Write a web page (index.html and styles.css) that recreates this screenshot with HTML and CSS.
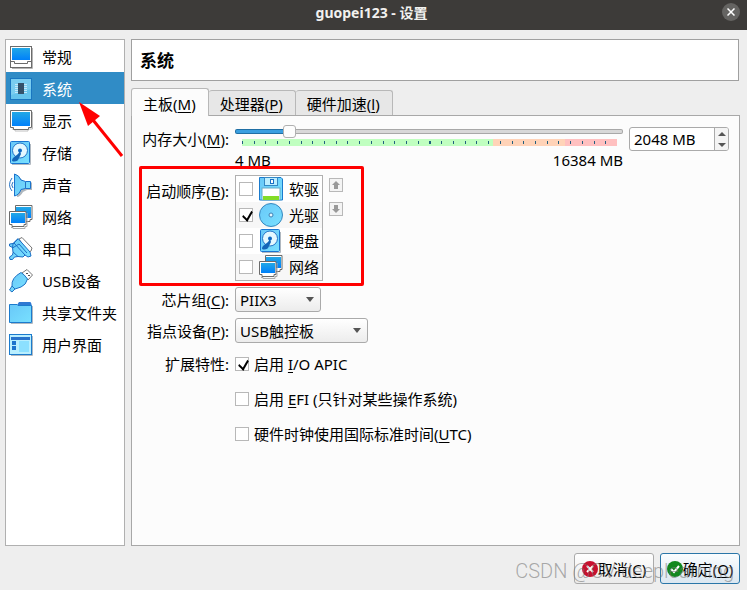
FILE: index.html
```
<!DOCTYPE html>
<html lang="zh-CN">
<head>
  <meta charset="UTF-8">
  <meta name="viewport" content="width=device-width, initial-scale=1.0">
  <title>guopei123 - 设置</title>
  <link rel="stylesheet" href="styles.css">
</head>
<body>
  <svg class="sprite" width="0" height="0" aria-hidden="true">
    <defs>
      <linearGradient id="screen" x1="0" y1="0" x2="0" y2="1">
        <stop offset="0" stop-color="#22a8e6"/>
        <stop offset="1" stop-color="#0080fa"/>
      </linearGradient>
      <linearGradient id="sky" x1="0" y1="0" x2="1" y2="1">
        <stop offset="0" stop-color="#69c8f8"/>
        <stop offset="1" stop-color="#78e0ff"/>
      </linearGradient>
      <symbol id="i-general" viewBox="0 0 24 24">
        <path d="M3 23.500H23.500V3" fill="none" stroke="#b5b5b5"/>
        <rect x="1.500" y="1.500" width="21" height="21" fill="#fff" stroke="#6b6b6b"/>
        <rect x="3" y="3" width="18" height="12" fill="url(#screen)"/>
        <path d="M2 16.500H5.500V18.500H18.500V16.500H22" fill="none" stroke="#6b6b6b"/>
      </symbol>
      <symbol id="i-system" viewBox="0 0 24 24">
        <rect x="1.500" y="1.500" width="21" height="21" fill="#65c3ec" stroke="#1976c0"/>
        <path d="M2 2H22V12L2 18Z" fill="#7acdf0"/>
        <path d="M6 7.500H18M6 9.500H18M6 11.500H18M6 13.500H18M6 15.500H18" stroke="#c4eafc"/>
        <rect x="9" y="6" width="6" height="11" fill="#34516a"/>
      </symbol>
      <symbol id="i-display" viewBox="0 0 24 24">
        <path d="M3 20H6V22H19V20H23.500V3" fill="none" stroke="#c0c0c0"/>
        <path d="M1.500 1.500H22.500V18.500H19.500V20.500H4.500V18.500H1.500Z" fill="#fff" stroke="#6b6b6b"/>
        <rect x="3" y="3" width="18" height="14" fill="url(#screen)"/>
      </symbol>
      <symbol id="i-disk" viewBox="0 0 24 24">
        <path d="M3 23.500H21.500V3" fill="none" stroke="#b0b8c0"/>
        <rect x="1.500" y=".5" width="19" height="22" rx="1" fill="url(#sky)" stroke="#1976d2"/>
        <circle cx="11" cy="9.500" r="7.500" fill="#e4f8ff" stroke="#2274c8"/>
        <path d="M11 10L9 13L4 17Q2 20 4 20.500Q9 21 10 17L12 13Z" fill="#1465b8"/>
        <circle cx="11" cy="9.500" r="2" fill="#0d67c2"/>
      </symbol>
      <symbol id="i-audio" viewBox="0 0 24 24">
        <path d="M7 3Q11 3 12.500 8L17 8.500H22V16H17L13 18Q10 23 7 23Z" fill="#aeb6bd" transform="translate(1 1)"/>
        <path d="M5.500 1Q10 2 12 7L16.500 8.500H21.500V15.500H16.500L12 16.500Q10 22 5.500 23Z" fill="url(#sky)" stroke="#1b73cd"/>
        <path d="M16.500 9V15.500M3 5Q-2 12 3 18M4 9Q1.500 12 4 15" fill="none" stroke="#2674c4"/>
      </symbol>
      <symbol id="i-network" viewBox="0 0 24 24">
        <path d="M6.500 .5H23V14.500H21V16.500H6.500Z" fill="#fff" stroke="#6b6b6b"/>
        <rect x="7" y="2" width="15" height="11" fill="url(#screen)"/>
        <path d="M2 22.500H4V23.500H16V21.500H18V8" fill="none" stroke="#aaa"/>
        <path d="M.5 6.500H17V19.500H15V21.500H3V19.500H.5Z" fill="#fff" stroke="#6b6b6b"/>
        <rect x="2" y="8" width="14" height="10" fill="url(#screen)"/>
      </symbol>
      <symbol id="i-serial" viewBox="0 0 24 24">
        <path d="M10 2L13 .5L23 11L22 14L19 16Z" fill="#fff" stroke="#777"/>
        <path d="M9 1.500L21 15L22 19L19 20L16 18L14 20L9 19.500L5.500 20L3.500 22.500H1L.5 20L3.500 18L4 15.500L3.500 10.500L.5 9V7L4 6.500Z" fill="url(#sky)" stroke="#1b6fc6"/>
        <path d="M5 6L16 18M9 2L4 7L3.500 11L10 7L18 16M4 15L9 19.500" fill="none" stroke="#1b6fc6"/>
      </symbol>
      <symbol id="i-usb" viewBox="0 0 24 24">
        <path d="M13 4L18 .5L23.500 6L19 11Z" fill="#fff" stroke="#777"/>
        <path d="M17 4.500H19M19 6.500H21" stroke="#555"/>
        <path d="M12 3.500Q15 5 18.500 10Q17 16 12 18L6 20L3 23L.5 21L3 17Q2 9 12 3.500Z" fill="url(#sky)" stroke="#2173c4"/>
        <path d="M3 17L6 20" stroke="#2173c4"/>
      </symbol>
      <symbol id="i-folder" viewBox="0 0 24 24">
        <path d="M2 22.500H23.500V5" fill="none" stroke="#b0b8c0"/>
        <path d="M8 4L10 1H21.500L22.500 3V6H8Z" fill="#2f79d2"/>
        <path d="M.5 3.500H8L9 4.500H22.500V21.500H.5Z" fill="url(#sky)" stroke="#1b7bcd"/>
      </symbol>
      <symbol id="i-ui" viewBox="0 0 24 24">
        <path d="M2 22.500H23.500V3" fill="none" stroke="#b0b8c0"/>
        <rect x=".5" y="1.500" width="22" height="20" fill="#b9efff" stroke="#1b7bcd"/>
        <rect x="2" y="4" width="19" height="3" fill="#2873cb"/>
        <path d="M3 8H7V12H3ZM3 13H7V17H3Z" fill="#1c73cd"/>
        <rect x="10" y="8" width="10" height="11" fill="#8ce0ff"/>
      </symbol>
      <symbol id="i-floppy" viewBox="0 0 24 24">
        <path d="M.5 .5H22L23.500 2V23H.5Z" fill="url(#sky)" stroke="#1b7bcd"/>
        <rect x="5.500" y=".5" width="13" height="8" fill="#bceeff" stroke="#3588c4"/>
        <rect x="11.500" y="2.500" width="3" height="4" fill="#fff" stroke="#1b6fc6"/>
        <rect x="3" y="11" width="18" height="12" fill="#fff" stroke="#68abc8"/>
        <rect x="4" y="19" width="16" height="4" fill="#83dc27"/>
      </symbol>
      <symbol id="i-optical" viewBox="0 0 24 24">
        <circle cx="12" cy="12" r="11.500" fill="url(#sky)" stroke="#3787be"/>
        <circle cx="12" cy="12" r="2" fill="#e3f7ff" stroke="#3f80b3"/>
      </symbol>
    </defs>
  </svg>

  <header class="titlebar">
    <h1>guopei123 - 设置</h1>
    <button class="close" type="button" aria-label="关闭">
      <svg width="8" height="8" viewBox="0 0 8 8"><path d="M.5 .5L7.500 7.500M7.500 .5L.5 7.500" stroke="#fff" stroke-width="1.500"/></svg>
    </button>
  </header>

  <main class="dialog">
    <nav class="sidebar">
      <a href="#general"><svg><use href="#i-general"/></svg>常规</a>
      <a href="#system" class="active"><svg><use href="#i-system"/></svg>系统
        <svg class="arrow" viewBox="0 0 46 56"><path d="M10 13L43 54" stroke="#f00" stroke-width="3"/><path d="M0 0L21 14L9 24Z" fill="#f00"/></svg>
      </a>
      <a href="#display"><svg><use href="#i-display"/></svg>显示</a>
      <a href="#storage"><svg><use href="#i-disk"/></svg>存储</a>
      <a href="#audio"><svg><use href="#i-audio"/></svg>声音</a>
      <a href="#network"><svg><use href="#i-network"/></svg>网络</a>
      <a href="#serial"><svg><use href="#i-serial"/></svg>串口</a>
      <a href="#usb"><svg><use href="#i-usb"/></svg>USB设备</a>
      <a href="#shared"><svg><use href="#i-folder"/></svg>共享文件夹</a>
      <a href="#ui"><svg><use href="#i-ui"/></svg>用户界面</a>
    </nav>

    <section class="content">
      <h2>系统</h2>
      <div class="tabs" role="tablist">
        <button type="button" role="tab" class="tab active" aria-selected="true">主板(<u>M</u>)</button>
        <button type="button" role="tab" class="tab">处理器(<u>P</u>)</button>
        <button type="button" role="tab" class="tab">硬件加速(<u>l</u>)</button>
      </div>

      <form class="panel" id="settings">
        <div class="row memory">
          <label class="name" for="memory">内存大小(<u>M</u>):</label>
          <div class="slider">
            <input type="range" id="memory" min="4" max="16384" value="2048">
            <div class="scale"></div>
            <div class="limits"><span>4 MB</span><span>16384 MB</span></div>
          </div>
          <div class="spin">
            <input type="text" value="2048 MB" aria-label="内存大小">
            <div class="steps">
              <button type="button" aria-label="增加"><i class="up"></i></button>
              <button type="button" aria-label="减少"><i class="down"></i></button>
            </div>
          </div>
        </div>

        <div class="row boot">
          <span class="name">启动顺序(<u>B</u>):</span>
          <div class="boot-list">
            <label><input type="checkbox"><svg><use href="#i-floppy"/></svg>软驱</label>
            <label><input type="checkbox" checked><svg><use href="#i-optical"/></svg>光驱</label>
            <label><input type="checkbox"><svg><use href="#i-disk"/></svg>硬盘</label>
            <label><input type="checkbox"><svg><use href="#i-network"/></svg>网络</label>
          </div>
          <div class="order">
            <button type="button" aria-label="上移"><svg viewBox="0 0 8 8"><path d="M4 0L8 4H6V8H2V4H0Z"/></svg></button>
            <button type="button" aria-label="下移"><svg viewBox="0 0 8 8"><path d="M4 8L8 4H6V0H2V4H0Z"/></svg></button>
          </div>
          <div class="highlight"></div>
        </div>

        <div class="row combo">
          <label class="name" for="chipset">芯片组(<u>C</u>):</label>
          <div class="select"><select id="chipset"><option>PIIX3</option><option>ICH9</option></select></div>
        </div>
        <div class="row combo">
          <label class="name" for="pointing">指点设备(<u>P</u>):</label>
          <div class="select wide"><select id="pointing"><option>USB触控板</option><option>PS/2 鼠标</option></select></div>
        </div>

        <div class="row features">
          <span class="name">扩展特性:</span>
          <div class="checks">
            <label><input type="checkbox" checked><span>启用 <u>I</u>/O APIC</span></label>
            <label><input type="checkbox"><span>启用 <u>E</u>FI (只针对某些操作系统)</span></label>
            <label><input type="checkbox"><span>硬件时钟使用国际标准时间(<u>U</u>TC)</span></label>
          </div>
        </div>
      </form>
    </section>
  </main>

  <footer class="actions">
    <button type="button"><svg viewBox="0 0 16 16"><circle cx="8" cy="8" r="8" fill="#c8102e"/><path d="M5 5L11 11M11 5L5 11" stroke="#fff" stroke-width="2"/></svg>取消(<u>C</u>)</button>
    <button type="submit" form="settings" class="primary"><svg viewBox="0 0 16 16"><circle cx="8" cy="8" r="8" fill="#12881f"/><path d="M4 8L7 11L12 5" fill="none" stroke="#fff" stroke-width="2"/></svg>确定(<u>O</u>)</button>
    <span class="watermark">CSDN @CV-deeplearning</span>
  </footer>
</body>
</html>
```
FILE: styles.css
```
* {
  box-sizing: border-box;
}
body {
  margin: 0;
  min-height: 100vh;
  display: flex;
  flex-direction: column;
  background: #eee;
  color: #000;
  font-family: "Noto Sans", "Noto Sans CJK SC", sans-serif;
  font-size: 15px;
  line-height: 20px;
}
button, input, select {
  font: inherit;
  color: inherit;
  margin: 0;
}
button {
  padding: 0;
}
u {
  text-underline-offset: 2px;
  text-decoration-thickness: 1px;
}
.sprite {
  position: absolute;
}

/* title bar */
.titlebar {
  display: grid;
  grid-template-columns: 1fr auto 1fr;
  align-items: center;
  height: 30px;
  padding: 0 7px 6px 3px;
  background: #3d3b39;
}
.titlebar h1 {
  grid-column: 2;
  margin: 0;
  padding-top: 2px;
  color: #f2f1ef;
  font-size: 14px;
  font-weight: bold;
}
.close {
  justify-self: end;
  display: flex;
  align-items: center;
  justify-content: center;
  width: 18px;
  height: 18px;
  border: 0;
  border-radius: 50%;
  background: #656462;
}

/* layout */
.dialog {
  flex: 1;
  display: flex;
  gap: 6px;
  padding: 9px 7px 7px 5px;
}
.sidebar {
  flex: none;
  width: 120px;
  border: 1px solid #b0b0b0;
  background: #fff;
}
.sidebar a {
  position: relative;
  display: flex;
  align-items: center;
  gap: 9px;
  height: 32px;
  padding: 1px 0 0 3px;
  color: #000;
  text-decoration: none;
  white-space: nowrap;
}
.sidebar svg {
  flex: none;
  width: 24px;
  height: 24px;
}
.sidebar a.active {
  background: #308cc6;
  color: #fff;
}
.sidebar .arrow {
  position: absolute;
  left: 73px;
  top: 30px;
  z-index: 1;
  width: 46px;
  height: 56px;
}
.content {
  flex: 1;
  display: flex;
  flex-direction: column;
}
.content h2 {
  margin: 0 1px 7px 0;
  padding: 11px 8px 9px;
  border: 1px solid #a0a0a0;
  background: #fff;
  font-size: 17px;
  line-height: 20px;
}

/* tabs */
.tabs {
  display: flex;
  align-items: flex-end;
}
.tab {
  height: 25px;
  padding: 2px 12px 0 11px;
  border: 1px solid #b8b8b8;
  border-left: 0;
  border-bottom: 0;
  border-radius: 3px 3px 0 0;
  background: #e7e7e7;
}
.tab.active {
  position: relative;
  height: 28px;
  margin-bottom: -1px;
  border-left: 1px solid #b8b8b8;
  background: #fcfcfc;
}
.panel {
  flex: 1;
  padding: 11px 10px 20px 0;
  border: 1px solid #a8a8a8;
  background: #fcfcfc;
}
.row {
  display: flex;
  gap: 6px;
}
.name {
  flex: none;
  width: 97px;
  text-align: right;
  white-space: nowrap;
}

/* memory */
.memory .name {
  padding-top: 2px;
}
.slider {
  flex: 1;
}
.slider input {
  appearance: none;
  display: block;
  width: 100%;
  height: 9px;
  background: none;
}
.slider input::-webkit-slider-runnable-track {
  height: 5px;
  border: 1px solid transparent;
  border-radius: 2px;
  background:
    linear-gradient(to right, #3a9fe0 14%, #d8d8d8 14%) padding-box,
    linear-gradient(to right, #1f6fa5 14%, #a8a8a8 14%) border-box;
}
.slider input::-webkit-slider-thumb {
  appearance: none;
  width: 13px;
  height: 13px;
  margin-top: -5px;
  border: 1px solid #b0b0b0;
  border-radius: 3px;
  background: #fdfdfd;
}
.scale {
  height: 7px;
  margin: 3px 6px 4px 7px;
  background:
    repeating-linear-gradient(to right, #206080 0 1px, transparent 1px 3.125%) 0 2px / 100% 3px no-repeat,
    linear-gradient(to right, #c0ffc0 67%, #ffd3b8 67% 86%, #ffc0c0 86%);
}
.limits {
  display: flex;
  justify-content: space-between;
}
.spin {
  display: flex;
  flex: none;
  width: 100px;
  height: 24px;
  border: 1px solid #aaa;
  border-radius: 3px;
  background: #fff;
  overflow: hidden;
}
.spin input {
  flex: 1;
  min-width: 0;
  padding: 0 4px;
  border: 0;
  background: none;
}
.steps {
  display: flex;
  flex-direction: column;
  width: 14px;
  border-left: 1px solid #aaa;
}
.steps button {
  flex: 1;
  display: flex;
  align-items: center;
  justify-content: center;
  border: 0;
  background: #f4f4f4;
}
.up, .down {
  border: 4px solid transparent;
}
.up {
  border-top: 0;
  border-bottom-color: #555;
}
.down {
  border-bottom: 0;
  border-top-color: #555;
}

/* boot order */
.boot {
  position: relative;
  margin-top: 5px;
}
.boot .name {
  padding-top: 6px;
}
.boot-list {
  width: 88px;
  border: 1px solid #b0b0b0;
  background: #fff;
}
.boot-list label {
  display: flex;
  align-items: center;
  height: 26px;
  padding-left: 3px;
}
.boot-list label:nth-child(even) {
  background: #f7f7f7;
}
.boot-list svg {
  flex: none;
  width: 24px;
  height: 24px;
  margin: 0 6px;
}
.order {
  display: flex;
  flex-direction: column;
  gap: 10px;
  padding-top: 3px;
}
.order button {
  display: flex;
  align-items: center;
  justify-content: center;
  width: 14px;
  height: 14px;
  border: 1px solid #b8b8b8;
  background: #f4f4f4;
}
.order svg {
  width: 8px;
  height: 8px;
  fill: #999;
}
.highlight {
  position: absolute;
  left: 7px;
  top: -9px;
  width: 225px;
  height: 120px;
  border: 3px solid #f00;
  border-radius: 2px;
  pointer-events: none;
}
input[type="checkbox"] {
  appearance: none;
  flex: none;
  width: 14px;
  height: 14px;
  border: 1px solid #b8b8b8;
  background: #fff;
}
input[type="checkbox"]:checked::after {
  content: "";
  display: block;
  width: 5px;
  height: 9px;
  margin: 0 0 0 4px;
  border: solid #000;
  border-width: 0 2px 2px 0;
  transform: rotate(30deg) skewY(15deg);
}

/* drop-downs */
.combo {
  align-items: center;
  margin-top: 6px;
}
.select {
  position: relative;
  width: 86px;
}
.select.wide {
  width: 133px;
}
.select select {
  appearance: none;
  display: block;
  width: 100%;
  height: 25px;
  padding: 0 20px 0 4px;
  border: 1px solid #aaa;
  border-radius: 3px;
  background: linear-gradient(#fff, #ececec);
}
.select::after {
  content: "";
  position: absolute;
  right: 7px;
  top: 10px;
  border: 4px solid transparent;
  border-top: 5px solid #555;
  border-bottom: 0;
  pointer-events: none;
}

.features {
  margin-top: 11px;
}
.checks {
  display: flex;
  flex-direction: column;
  gap: 15px;
}
.checks label {
  display: flex;
  align-items: center;
  gap: 5px;
}

/* bottom buttons */
.actions {
  position: relative;
  display: flex;
  justify-content: flex-end;
  gap: 6px;
  padding: 0 7px 6px;
}
.actions button {
  display: flex;
  align-items: center;
  justify-content: center;
  width: 80px;
  height: 31px;
  border: 1px solid #aaa;
  border-radius: 3px;
  background: linear-gradient(#fefefe, #ebebeb);
}
.actions .primary {
  border-color: #2a76a8;
  background: linear-gradient(#fafdff, #dbe7f0);
}
.actions svg {
  flex: none;
  width: 16px;
  height: 16px;
}
.watermark {
  position: absolute;
  right: 13px;
  top: 8px;
  color: #7779;
  font-family: Roboto, "Liberation Sans", sans-serif;
  font-size: 20px;
  font-weight: 300;
  pointer-events: none;
}
```
